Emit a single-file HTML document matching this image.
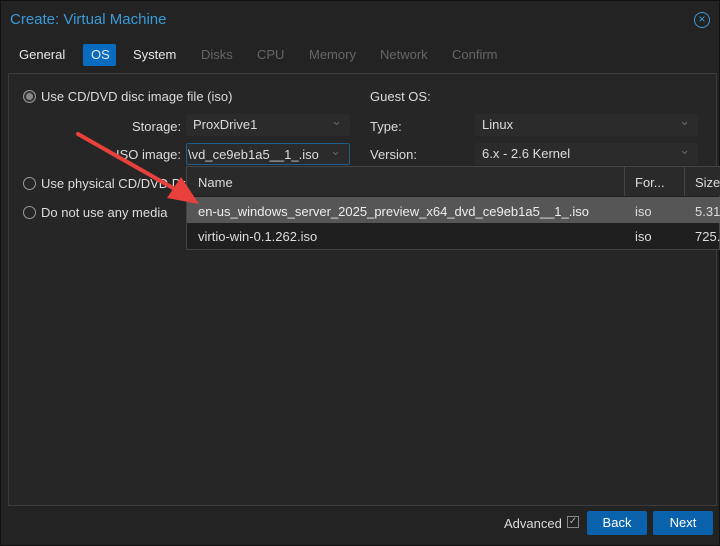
<!DOCTYPE html><html><head><style>
body{margin:0;width:720px;height:546px;background:#232323;font-family:"Liberation Sans",sans-serif;font-size:13px;color:#ddd;position:relative;overflow:hidden}
.a{position:absolute}
.title{left:10px;top:11px;font-size:15px;color:#3a9bd8}
.tab{top:47px;font-size:13px;color:#e8e8e8}
.dis{color:#666}
.sel{background:#2b2b2b;border-radius:2px;height:22px;line-height:22px;padding-left:7px;color:#ddd;box-sizing:border-box;overflow:hidden;white-space:nowrap}
.sel:after{content:"⌄";position:absolute;right:8px;top:-4px;color:#666}
.rad{width:13px;height:13px;border:1px solid #999;border-radius:50%;box-sizing:border-box}
</style></head><body>
<div class="a" style="left:0;top:0;width:720px;height:546px;border:1px solid #111;box-sizing:border-box"></div>
<div class="a title">Create: Virtual Machine</div>
<div class="a" style="left:694px;top:12px;width:14px;height:14px;border:1.3px solid #3a9bd8;border-radius:50%;color:#3a9bd8;font-size:12px;line-height:13px;text-align:center">×</div>
<div class="a tab" style="left:19px">General</div>
<div class="a" style="left:83px;top:44px;width:33px;height:22px;background:#0a6cc0;border-radius:2px"></div>
<div class="a tab" style="left:91px">OS</div>
<div class="a tab" style="left:133px">System</div>
<div class="a tab dis" style="left:201px">Disks</div>
<div class="a tab dis" style="left:257px">CPU</div>
<div class="a tab dis" style="left:309px">Memory</div>
<div class="a tab dis" style="left:380px">Network</div>
<div class="a tab dis" style="left:452px">Confirm</div>
<div class="a" style="left:8px;top:73px;width:709px;height:433px;background:#262626;border:1px solid #3c3c3c;box-sizing:border-box"></div>
<div class="a rad" style="left:23px;top:90px;background:#888;box-shadow:inset 0 0 0 2px #333"></div>
<div class="a" style="left:41px;top:89px">Use CD/DVD disc image file (iso)</div>
<div class="a" style="left:132px;top:119px">Storage:</div>
<div class="a sel" style="left:186px;top:114px;width:164px">ProxDrive1</div>
<div class="a" style="left:116px;top:147px">ISO image:</div>
<div class="a sel" style="left:186px;top:143px;width:164px;border:1px solid #1d5f8c;padding-left:4px;text-indent:-3px">\vd_ce9eb1a5__1_.iso</div>
<div class="a rad" style="left:23px;top:177px"></div>
<div class="a" style="left:41px;top:176px">Use physical CD/DVD Dr</div>
<div class="a rad" style="left:23px;top:206px"></div>
<div class="a" style="left:41px;top:205px">Do not use any media</div>
<div class="a" style="left:370px;top:89px">Guest OS:</div>
<div class="a" style="left:370px;top:119px">Type:</div>
<div class="a sel" style="left:475px;top:114px;width:223px">Linux</div>
<div class="a" style="left:370px;top:147px">Version:</div>
<div class="a sel" style="left:475px;top:143px;width:223px">6.x - 2.6 Kernel</div>
<div class="a" style="left:186px;top:166px;width:534px;height:84px;background:#1f1f1f;border:1px solid #444;box-sizing:border-box"></div>
<div class="a" style="left:187px;top:167px;width:533px;height:29px;background:#2a2a2a"></div>
<div class="a" style="left:624px;top:167px;width:1px;height:29px;background:#444"></div>
<div class="a" style="left:684px;top:167px;width:1px;height:29px;background:#444"></div>
<div class="a" style="left:198px;top:175px">Name</div>
<div class="a" style="left:635px;top:175px">For...</div>
<div class="a" style="left:695px;top:175px">Size</div>
<div class="a" style="left:187px;top:197px;width:533px;height:26px;background:#565656"></div>
<div class="a" style="left:198px;top:204px;color:#eee">en-us_windows_server_2025_preview_x64_dvd_ce9eb1a5__1_.iso</div>
<div class="a" style="left:635px;top:204px">iso</div>
<div class="a" style="left:695px;top:204px">5.31</div>
<div class="a" style="left:198px;top:229px">virtio-win-0.1.262.iso</div>
<div class="a" style="left:635px;top:229px">iso</div>
<div class="a" style="left:695px;top:229px">725.</div>
<svg class="a" style="left:0;top:0" width="720" height="546"><line x1="78" y1="134" x2="180" y2="192" stroke="#e8413c" stroke-width="4" stroke-linecap="round"/><polygon points="199,204 167,198 181,177" fill="#e8413c"/></svg>
<div class="a" style="left:504px;top:516px">Advanced</div>
<div class="a" style="left:567px;top:516px;width:12px;height:12px;border:1px solid #888;box-sizing:border-box;font-size:10px;line-height:10px;color:#aaa;text-align:center">✓</div>
<div class="a" style="left:587px;top:511px;width:60px;height:24px;background:#0a62ad;border-radius:2px;color:#fff;text-align:center;line-height:24px">Back</div>
<div class="a" style="left:653px;top:511px;width:60px;height:24px;background:#0a62ad;border-radius:2px;color:#fff;text-align:center;line-height:24px">Next</div>
</body></html>
